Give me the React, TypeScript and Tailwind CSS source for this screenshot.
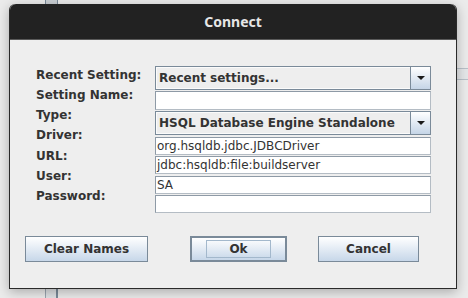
const labels = [
  "Recent Setting:",
  "Setting Name:",
  "Type:",
  "Driver:",
  "URL:",
  "User:",
  "Password:",
];

const ComboBox: React.FC<{ value: string }> = ({ value }) => (
  <div className="h-[24px] flex border border-[#7a8a99] bg-[#eeeeee]">
    <div className="flex-1 flex items-center pl-[2px] border border-[#fbfbfb] border-r-0 font-bold text-[12px] text-[#333333] whitespace-nowrap overflow-hidden">
      {value}
    </div>
    <div className="w-[20px] flex items-center justify-center border-l border-[#7a8a99] bg-gradient-to-b from-[#ffffff] to-[#c5d5e7]">
      <svg width="8" height="4" viewBox="0 0 8 4">
        <polygon points="0,0 8,0 4,4" fill="#1a1a1a" />
      </svg>
    </div>
  </div>
);

const TextField: React.FC<{ value?: string; h?: string }> = ({ value = "", h = "h-[18px]" }) => (
  <div
    className={`${h} flex items-center pl-[1px] bg-white border border-[#8e9aa6] border-b-[#b4bcc4] border-r-[#b4bcc4] text-[12px] text-[#333333] whitespace-nowrap overflow-hidden`}
  >
    {value}
  </div>
);

const Button: React.FC<{ label: string; w: string; focused?: boolean }> = ({ label, w, focused }) => (
  <div
    className={`${w} h-[26px] flex items-center justify-center bg-gradient-to-b from-[#ffffff] to-[#c7d7e9] font-bold text-[12px] text-[#333333] ${
      focused ? "border-2 border-[#7a8a99]" : "border border-[#7a8a99]"
    }`}
  >
    {focused ? (
      <div className="w-[65px] h-[18px] flex items-center justify-center border border-[#a3b8cc]">{label}</div>
    ) : (
      label
    )}
  </div>
);

export default function App() {
  return (
    <div className="relative w-[468px] h-[298px] overflow-hidden bg-[#ebebeb] pt-[4px] pl-[9px] font-['DejaVu_Sans',sans-serif]">
      {/* bits of the app behind the dialog */}
      <div className="absolute left-[45px] top-0 w-[13px] h-[4px] bg-[#c9ced3] border-x border-[#7a8a99]" />
      <div className="absolute left-[45px] top-[288px] w-[13px] h-[10px] bg-[#dfe2e5] border-l border-[#9aa5b0] border-r-2 border-r-[#7a8a99]" />
      <div className="absolute left-[457px] top-[68px] w-[11px] h-[12px] bg-[#e4e6e8] border-y border-[#b8c0c8]" />

      <div className="relative w-[448px] h-[285px] flex flex-col rounded-t-[6px] border border-[#2a2a2a] border-t-0 bg-[#eeeeee] shadow-[0_3px_12px_rgba(0,0,0,0.28)]">
        <div className="h-[36px] shrink-0 flex items-center justify-center rounded-t-[6px] bg-[#222222] border-b border-[#5a5a5a] font-['Noto_Sans',sans-serif] font-bold text-[14px] text-[#e6e6e6]">
          Connect
        </div>

        <div className="flex pt-[26px] pl-[26px]">
          <div className="w-[119px] flex flex-col gap-[6.3px] pt-[1.6px] font-bold text-[12px] leading-[14px] text-[#333333]">
            {labels.map((l) => (
              <div key={l}>{l}</div>
            ))}
          </div>
          <div className="w-[276px] flex flex-col">
            <ComboBox value="Recent settings..." />
            <div className="mt-[1px]">
              <TextField h="h-[19px]" />
            </div>
            <div className="mt-[1px]">
              <ComboBox value="HSQL Database Engine Standalone" />
            </div>
            <div className="mt-[1.5px] flex flex-col gap-[1.5px]">
              <TextField value="org.hsqldb.jdbc.JDBCDriver" />
              <TextField value="jdbc:hsqldb:file:buildserver" />
              <TextField value="SA" />
              <TextField />
            </div>
          </div>
        </div>

        <div className="flex pl-[15px] mt-[23px]">
          <Button label="Clear Names" w="w-[123px]" />
          <div className="ml-[42px]">
            <Button label="Ok" w="w-[97px]" focused />
          </div>
          <div className="ml-[31px]">
            <Button label="Cancel" w="w-[101px]" />
          </div>
        </div>
      </div>
    </div>
  );
}
